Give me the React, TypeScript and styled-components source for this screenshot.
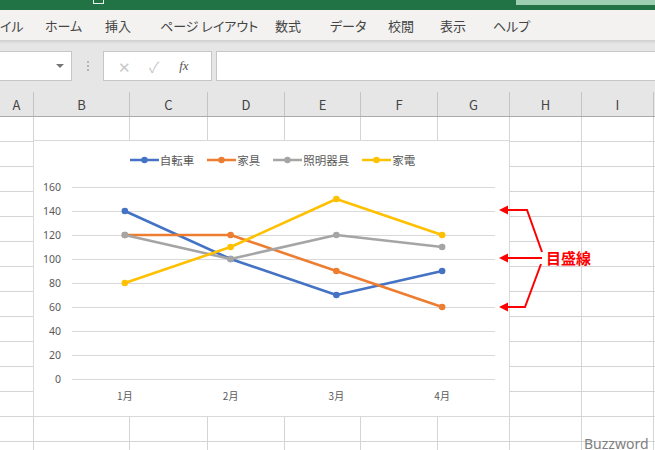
import React from "react";
import styled, { createGlobalStyle } from "styled-components";

const GlobalStyle = createGlobalStyle`
  html, body {
    margin: 0;
    padding: 0;
    background: #ffffff;
  }
  body {
    font-family: "Noto Sans CJK JP", "Noto Sans", sans-serif;
  }
`;

const JP = `"Noto Sans CJK JP", "Noto Sans", sans-serif`;

const Window = styled.div`
  position: relative;
  width: 655px;
  height: 450px;
  overflow: hidden;
  background: #ffffff;
`;

const TitleBar = styled.div`
  height: 10px;
  background: #217346;
  display: flex;
  align-items: flex-start;
`;

const QatIcon = styled.span<{ $ml: number }>`
  margin-left: ${({ $ml }) => $ml}px;
  width: 9px;
  height: 3px;
  border: 1px solid #e8f0eb;
  border-top: none;
`;

const SearchBox = styled.div`
  margin-left: auto;
  width: 139px;
  height: 5px;
  background: #9fcfb3;
`;

const RibbonTabs = styled.div`
  height: 30px;
  background: #f3f2f1;
  display: flex;
  align-items: center;
  font-family: ${JP};
  font-feature-settings: "palt";
  font-size: 13px;
  color: #444444;
  white-space: nowrap;
`;

const Tab = styled.span<{ $w: number }>`
  flex: none;
  width: ${({ $w }) => $w}px;
`;

const FormulaBar = styled.div`
  height: 49px;
  box-sizing: border-box;
  background: linear-gradient(#cfcfcf 0, #e0e0e0 3px, #e6e6e6 4px);
  display: flex;
  align-items: center;
  padding-top: 3px;
`;

const NameBox = styled.div`
  flex: none;
  width: 72px;
  height: 30px;
  box-sizing: border-box;
  background: #ffffff;
  border: 1px solid #c6c6c6;
  border-left: none;
  display: flex;
  align-items: center;
  justify-content: flex-end;
  padding-right: 7px;
`;

const DropArrow = styled.span`
  width: 0;
  height: 0;
  border-left: 4px solid transparent;
  border-right: 4px solid transparent;
  border-top: 4px solid #767676;
`;

const Grip = styled.span`
  flex: none;
  width: 31px;
  display: flex;
  flex-direction: column;
  align-items: center;
  gap: 2px;
  i {
    width: 2px;
    height: 2px;
    background: #b4b4b4;
  }
`;

const FxBox = styled.div`
  flex: none;
  width: 109px;
  height: 30px;
  box-sizing: border-box;
  background: #ffffff;
  border: 1px solid #c6c6c6;
  display: flex;
  align-items: center;
  padding-left: 14px;
  gap: 18px;
  font-size: 15px;
  color: #c8c8c8;
`;

const Fx = styled.span`
  font-family: "Liberation Serif", serif;
  font-style: italic;
  font-size: 13px;
  color: #555555;
  margin-left: 2px;
`;

const FormulaInput = styled.div`
  flex: 1;
  margin-left: 4px;
  height: 30px;
  box-sizing: border-box;
  background: #ffffff;
  border: 1px solid #c6c6c6;
  border-right: none;
`;

const HeaderRow = styled.div`
  height: 28px;
  box-sizing: border-box;
  display: flex;
  background: #e6e6e6;
  border-bottom: 1px solid #ababab;
`;

const HeaderCell = styled.div<{ $w: number }>`
  flex: none;
  width: ${({ $w }) => $w}px;
  box-sizing: border-box;
  border-right: 1px solid #c4c4c4;
  margin-top: 3px;
  display: flex;
  align-items: center;
  justify-content: center;
  font-family: ${JP};
  font-size: 13px;
  color: #444444;
`;

const Row = styled.div`
  height: 25px;
  display: flex;
`;

const Cell = styled.div<{ $w: number }>`
  flex: none;
  width: ${({ $w }) => $w}px;
  box-sizing: border-box;
  border-right: 1px solid #d4d4d4;
  border-bottom: 1px solid #d4d4d4;
`;

const Chart = styled.div`
  position: absolute;
  left: 33px;
  top: 140px;
  width: 477px;
  height: 277px;
  box-sizing: border-box;
  background: #ffffff;
  border: 1px solid #d9d9d9;
  display: flex;
  flex-direction: column;
`;

const Legend = styled.div`
  height: 38px;
  display: flex;
  justify-content: center;
  align-items: center;
  gap: 13px;
  padding-left: 2px;
  font-family: ${JP};
  font-size: 11.5px;
  color: #595959;
`;

const LegendItem = styled.span`
  display: flex;
  align-items: center;
  gap: 1px;
`;

const Annotation = styled.div`
  position: absolute;
  left: 495px;
  top: 200px;
  width: 110px;
  height: 115px;
`;

const AnnotationLabel = styled.span`
  position: absolute;
  left: 51px;
  top: 47px;
  line-height: 22px;
  font-family: ${JP};
  font-weight: 700;
  font-size: 15px;
  color: #ff0000;
  white-space: nowrap;
`;

const Watermark = styled.span`
  position: absolute;
  left: 584px;
  top: 435px;
  line-height: 18px;
  font-family: "Noto Sans", sans-serif;
  font-size: 14px;
  color: #7f7f7f;
`;

const tabs = [
  { label: "イル", w: 45 },
  { label: "ホーム", w: 60 },
  { label: "挿入", w: 55 },
  { label: "ページ レイアウト", w: 115 },
  { label: "数式", w: 55 },
  { label: "データ", w: 58 },
  { label: "校閲", w: 52 },
  { label: "表示", w: 53 },
  { label: "ヘルプ", w: 60 },
];

const columns = [
  { name: "A", w: 34 },
  { name: "B", w: 96 },
  { name: "C", w: 78 },
  { name: "D", w: 77 },
  { name: "E", w: 76 },
  { name: "F", w: 77 },
  { name: "G", w: 72 },
  { name: "H", w: 72 },
  { name: "I", w: 72 },
  { name: "", w: 40 },
];

const series = [
  { name: "自転車", color: "#4472c4", values: [140, 100, 70, 90] },
  { name: "家具", color: "#ed7d31", values: [120, 120, 90, 60] },
  { name: "照明器具", color: "#a5a5a5", values: [120, 100, 120, 110] },
  { name: "家電", color: "#ffc000", values: [80, 110, 150, 120] },
];

const months = ["1月", "2月", "3月", "4月"];
const ticks = [160, 140, 120, 100, 80, 60, 40, 20, 0];

// chart-local coordinates (chart box starts at page 33,141)
const plotLeft = 38;
const plotRight = 461;
const slot = (plotRight - plotLeft) / months.length;
const xAt = (i: number) => plotLeft + slot * (i + 0.5);
const yAt = (v: number) => 238 - v * 1.2;

const LegendMarker = ({ color }: { color: string }) => (
  <svg width="29" height="10" viewBox="0 0 29 10">
    <line x1="0" y1="5" x2="29" y2="5" stroke={color} strokeWidth="2.5" />
    <circle cx="14.5" cy="5" r="3.2" fill={color} />
  </svg>
);

const Plot = () => (
  <svg width="475" height="237" viewBox="0 38 475 237">
    {ticks.map((t) => (
      <g key={t}>
        <line x1={plotLeft} x2={plotRight} y1={yAt(t) + 0.5} y2={yAt(t) + 0.5} stroke="#d9d9d9" strokeWidth="1" />
        <text
          x="27"
          y={yAt(t) + 4}
          textAnchor="end"
          fontFamily="Noto Sans, sans-serif"
          fontSize="10.5"
          fill="#595959"
        >
          {t}
        </text>
      </g>
    ))}
    {months.map((m, i) => (
      <text
        key={m}
        x={xAt(i)}
        y="259"
        textAnchor="middle"
        fontFamily="Noto Sans CJK JP, sans-serif"
        fontSize="10"
        fill="#595959"
      >
        {m}
      </text>
    ))}
    {series.map((s) => (
      <g key={s.name}>
        <polyline
          points={s.values.map((v, i) => `${xAt(i)},${yAt(v)}`).join(" ")}
          fill="none"
          stroke={s.color}
          strokeWidth="2.6"
          strokeLinejoin="round"
        />
        {s.values.map((v, i) => (
          <circle key={i} cx={xAt(i)} cy={yAt(v)} r="3.3" fill={s.color} />
        ))}
      </g>
    ))}
  </svg>
);

const Arrows = () => (
  <svg width="110" height="115" viewBox="0 0 110 115">
    <g stroke="#ff0000" strokeWidth="2" fill="none">
      <polyline points="10,10 32,10 47,52" />
      <line x1="10" y1="58" x2="47" y2="58" />
      <polyline points="10,107 30,107 46,64" />
    </g>
    <g fill="#ff0000">
      <polygon points="4,10 13,5.5 13,14.5" />
      <polygon points="4,58 13,53.5 13,62.5" />
      <polygon points="4,107 13,102.5 13,111.5" />
    </g>
  </svg>
);

export default function App() {
  return (
    <Window>
      <GlobalStyle />
      <TitleBar>
        <QatIcon $ml={93} />
        <SearchBox />
      </TitleBar>
      <RibbonTabs>
        {tabs.map((t) => (
          <Tab key={t.label} $w={t.w}>
            {t.label}
          </Tab>
        ))}
      </RibbonTabs>
      <FormulaBar>
        <NameBox>
          <DropArrow />
        </NameBox>
        <Grip>
          <i />
          <i />
          <i />
        </Grip>
        <FxBox>
          <span>✕</span>
          <span>✓</span>
          <Fx>fx</Fx>
        </FxBox>
        <FormulaInput />
      </FormulaBar>
      <HeaderRow>
        {columns.map((c, i) => (
          <HeaderCell key={i} $w={c.w}>
            {c.name}
          </HeaderCell>
        ))}
      </HeaderRow>
      {Array.from({ length: 14 }).map((_, r) => (
        <Row key={r}>
          {columns.map((c, i) => (
            <Cell key={i} $w={c.w} />
          ))}
        </Row>
      ))}
      <Chart>
        <Legend>
          {series.map((s) => (
            <LegendItem key={s.name}>
              <LegendMarker color={s.color} />
              {s.name}
            </LegendItem>
          ))}
        </Legend>
        <Plot />
      </Chart>
      <Annotation>
        <Arrows />
        <AnnotationLabel>目盛線</AnnotationLabel>
      </Annotation>
      <Watermark>Buzzword</Watermark>
    </Window>
  );
}
